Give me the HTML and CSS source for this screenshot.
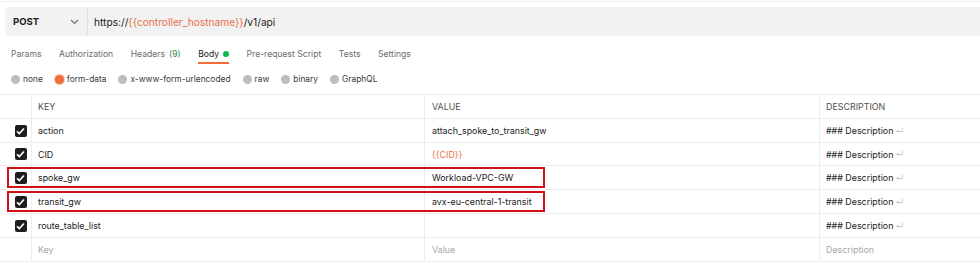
FILE: index.html
```html
<!DOCTYPE html>
<html>
<head>
<meta charset="utf-8">
<link rel="stylesheet" href="styles.css">
</head>
<body>
<div class="page">
  <div class="topline"></div>
  <div class="urlbar">
    <div class="method">
      <span class="method-name">POST</span>
      <svg class="chev" width="9" height="6" viewBox="0 0 9 6"><path d="M1 1l3.5 3.5L8 1" fill="none" stroke="#6b6b6b" stroke-width="1.1"/></svg>
    </div>
    <div class="url">https://<span class="var">{{controller_hostname}}</span>/v1/api</div>
  </div>
  <div class="tabs">
    <span class="tab">Params</span>
    <span class="tab">Authorization</span>
    <span class="tab">Headers <span class="count">(9)</span></span>
    <span class="tab active">Body <span class="dot"></span></span>
    <span class="tab">Pre-request Script</span>
    <span class="tab">Tests</span>
    <span class="tab">Settings</span>
  </div>
  <div class="radios">
    <span class="radio"><span class="rb"></span>none</span>
    <span class="radio"><span class="rb on"></span>form-data</span>
    <span class="radio"><span class="rb"></span>x-www-form-urlencoded</span>
    <span class="radio"><span class="rb"></span>raw</span>
    <span class="radio"><span class="rb"></span>binary</span>
    <span class="radio"><span class="rb"></span>GraphQL</span>
  </div>
  <div class="table">
    <div class="row head">
      <div class="c0"></div>
      <div class="c1">KEY</div>
      <div class="c2">VALUE</div>
      <div class="c3">DESCRIPTION</div>
    </div>
    <div class="row">
      <div class="c0"><span class="cb"><svg width="9" height="8" viewBox="0 0 9 8"><path d="M1 4.2l2.3 2.3L8 1.5" fill="none" stroke="#fff" stroke-width="1.6"/></svg></span></div>
      <div class="c1">action</div>
      <div class="c2">attach_spoke_to_transit_gw</div>
      <div class="c3">### Description <span class="ret">↵</span></div>
    </div>
    <div class="row short">
      <div class="c0"><span class="cb"><svg width="9" height="8" viewBox="0 0 9 8"><path d="M1 4.2l2.3 2.3L8 1.5" fill="none" stroke="#fff" stroke-width="1.6"/></svg></span></div>
      <div class="c1">CID</div>
      <div class="c2 var">{{CID}}</div>
      <div class="c3">### Description <span class="ret">↵</span></div>
    </div>
    <div class="row">
      <div class="c0"><span class="cb"><svg width="9" height="8" viewBox="0 0 9 8"><path d="M1 4.2l2.3 2.3L8 1.5" fill="none" stroke="#fff" stroke-width="1.6"/></svg></span></div>
      <div class="c1">spoke_gw</div>
      <div class="c2">Workload-VPC-GW</div>
      <div class="c3">### Description <span class="ret">↵</span></div>
      <div class="mark"></div>
    </div>
    <div class="row">
      <div class="c0"><span class="cb"><svg width="9" height="8" viewBox="0 0 9 8"><path d="M1 4.2l2.3 2.3L8 1.5" fill="none" stroke="#fff" stroke-width="1.6"/></svg></span></div>
      <div class="c1">transit_gw</div>
      <div class="c2">avx-eu-central-1-transit</div>
      <div class="c3">### Description <span class="ret">↵</span></div>
      <div class="mark"></div>
    </div>
    <div class="row">
      <div class="c0"><span class="cb"><svg width="9" height="8" viewBox="0 0 9 8"><path d="M1 4.2l2.3 2.3L8 1.5" fill="none" stroke="#fff" stroke-width="1.6"/></svg></span></div>
      <div class="c1">route_table_list</div>
      <div class="c2"></div>
      <div class="c3">### Description <span class="ret">↵</span></div>
    </div>
    <div class="row short">
      <div class="c0"></div>
      <div class="c1 ph">Key</div>
      <div class="c2 ph">Value</div>
      <div class="c3 ph">Description</div>
    </div>
  </div>
</div>
</body>
</html>
```

FILE: styles.css
```css
* { box-sizing: border-box; }
html, body { margin: 0; padding: 0; background: #fff; }
body {
  font-family: Inter, "Noto Sans", sans-serif;
  font-size: 8.9px;
  color: #212121;
  width: 980px;
  height: 278px;
  overflow: hidden;
}
.page { width: 980px; }
.topline { height: 2px; border-bottom: 1px solid #f0f0f0; }

.urlbar {
  margin: 5px 0 0 5px;
  height: 29px;
  background: #f2f2f2;
  border-radius: 3px 0 0 3px;
  display: flex;
  align-items: center;
}
.method {
  width: 83px;
  height: 100%;
  border-right: 1px solid #e4e4e4;
  display: flex;
  align-items: center;
  justify-content: space-between;
  padding: 0 8px 0 8px;
}
.method-name { font-weight: 700; font-size: 9.5px; color: #212121; }
.url { padding-left: 6px; font-size: 10.2px; color: #212121; }
.var { color: #e8704a; }

.tabs {
  display: flex;
  gap: 17.5px;
  padding-left: 11px;
  height: 28px;
}
.tab {
  color: #6b6b6b;
  font-size: 8.6px;
  position: relative;
  height: 28px;
  padding-top: 7px;
  display: flex;
  align-items: center;
  gap: 4px;
}
.tab .count { color: #2b8a48; }
.tab.active { color: #212121; }
.tab.active::after {
  content: "";
  position: absolute;
  left: 0; right: 0; bottom: 0;
  height: 2px;
  background: #f26b3a;
}
.dot { width: 6px; height: 6px; border-radius: 50%; background: #0cbb52; display: inline-block; }

.radios {
  display: flex;
  align-items: center;
  gap: 12px;
  padding-left: 11px;
  height: 30px;
}
.radio { display: flex; align-items: center; gap: 3px; color: #3a3a3a; font-size: 8.4px; }
.rb { width: 9px; height: 9px; border-radius: 50%; background: #bdbdbd; display: inline-block; }
.rb.on { background: #f26b3a; box-shadow: 0 0 0 1px #f5c4b0; }

.table { border-top: 1px solid #ededed; border-bottom: 1px solid #ededed; }
.row {
  display: flex;
  height: 24px;
  border-bottom: 1px solid #ededed;
  position: relative;
}
.row:last-child { border-bottom: none; }
.row.short { height: 23px; }
.row > div { display: flex; align-items: center; }
.c0 { width: 32px; border-right: 1px solid #ededed; justify-content: center; padding-left: 10px; }
.c1 { width: 393px; border-right: 1px solid #ededed; padding-left: 6px; }
.c2 { width: 395px; border-right: 1px solid #ededed; padding-left: 7px; }
.c3 { flex: 1; padding-left: 6px; }
.head > div { color: #505050; }
.ph { color: #a8a8a8; }
.ret { color: #bdbdbd; font-size: 8px; margin-left: 2px; }

.cb {
  width: 12px; height: 12px;
  background: #1e1e1e;
  border-radius: 2px;
  display: flex; align-items: center; justify-content: center;
}
.mark {
  position: absolute;
  left: 7px;
  top: 1px;
  width: 538px;
  height: 21px;
  border: 2px solid #d0101b;
  pointer-events: none;
}
```
